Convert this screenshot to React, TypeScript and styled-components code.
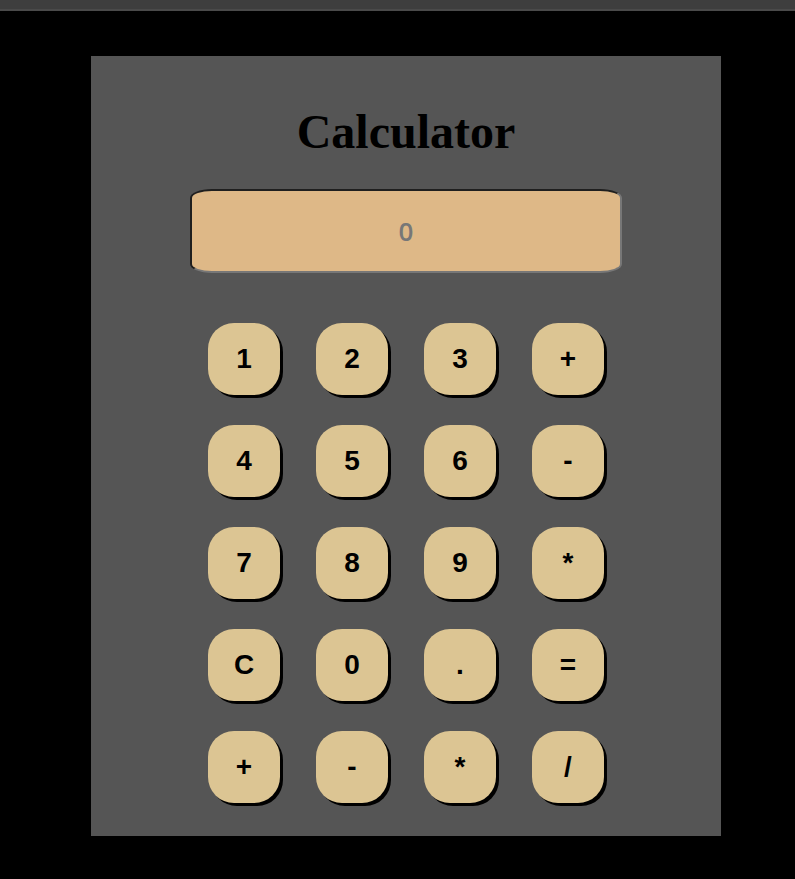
import React, { useState } from "react";
import styled, { createGlobalStyle } from "styled-components";

const GlobalStyle = createGlobalStyle`
  html, body {
    margin: 0;
    padding: 0;
    background-color: #000;
  }

  body {
    font-family: "Liberation Sans", Arial, sans-serif;
  }
`;

const TopBar = styled.div`
  height: 9px;
  background-color: #3e3e3e;
  border-bottom: 2px solid #4a4a4a;
`;

const Page = styled.div`
  min-height: 868px;
  padding: 45px 0 0 91px;
  box-sizing: border-box;
`;

const Panel = styled.div`
  width: 630px;
  height: 780px;
  box-sizing: border-box;
  padding-top: 48px;

  background-color: #555555;

  display: flex;
  flex-direction: column;
  align-items: center;
`;

const Title = styled.h1`
  margin: 0;
  font-family: "Liberation Serif", "Times New Roman", serif;
  font-size: 48px;
  font-weight: bold;
  color: #000;
`;

const Display = styled.input`
  width: 432px;
  height: 84px;
  box-sizing: border-box;
  margin-top: 30px;

  background-color: burlywood;

  border: 2px solid;
  border-color: #1f1f1f #777 #777 #1f1f1f;
  border-radius: 22px / 9px;
  outline: none;

  text-align: center;
  font-family: "Open Sans", "Noto Sans", sans-serif;
  font-size: 26px;
  font-weight: 600;
  color: #777;
`;

const Keys = styled.div`
  margin-top: 50px;

  display: grid;
  grid-template-columns: repeat(4, 72px);
  grid-auto-rows: 72px;
  column-gap: 36px;
  row-gap: 30px;
`;

const Key = styled.button`
  padding: 0;
  background-color: #dcc593;

  border: none;
  border-radius: 26px;
  box-shadow: 3px 3px 0 #000;

  display: flex;
  align-items: center;
  justify-content: center;

  font-family: "Liberation Sans", Arial, sans-serif;
  font-size: 28px;
  font-weight: bold;
  color: #000;
  cursor: pointer;
`;

const keys = [
  "1", "2", "3", "+",
  "4", "5", "6", "-",
  "7", "8", "9", "*",
  "C", "0", ".", "=",
  "+", "-", "*", "/",
];

function App() {
  const [value, setValue] = useState("0");

  const press = (k: string) => {
    if (k === "C") {
      setValue("0");
      return;
    }
    if (k === "=") {
      try {
        // eslint-disable-next-line no-new-func
        const result = Function(`return (${value})`)();
        setValue(String(result));
      } catch {
        setValue("Error");
      }
      return;
    }
    setValue((v) => (v === "0" || v === "Error" ? k : v + k));
  };

  return (
    <>
      <GlobalStyle />
      <TopBar />
      <Page>
        <Panel>
          <Title>Calculator</Title>
          <Display value={value} readOnly />
          <Keys>
            {keys.map((k, i) => (
              <Key key={i} onClick={() => press(k)}>
                {k}
              </Key>
            ))}
          </Keys>
        </Panel>
      </Page>
    </>
  );
}

export default App;
